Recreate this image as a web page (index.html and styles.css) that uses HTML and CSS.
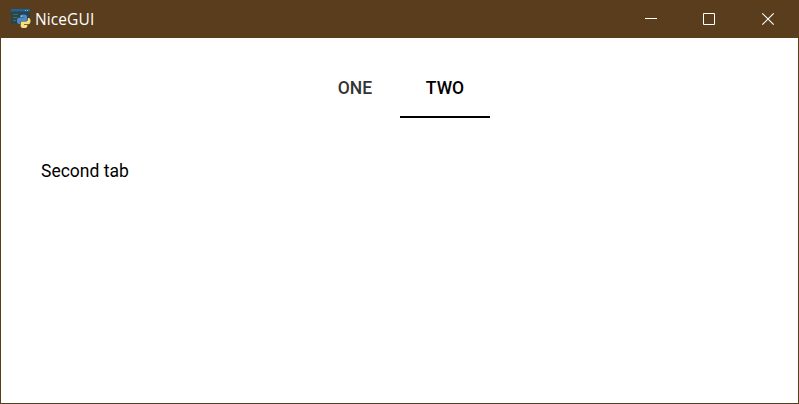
FILE: index.html
```html
<!DOCTYPE html>
<html lang="en">
<head>
<meta charset="utf-8">
<title>NiceGUI</title>
<link rel="stylesheet" href="styles.css">
</head>
<body>
<div class="window">
  <header class="titlebar">
    <svg class="app-icon" width="20" height="20" viewBox="0 0 20 20">
      <path fill="#2b4350" d="M0 0h19v15H0z"/>
      <path fill="#1c659b" d="M0 0h19v2.500H0z"/>
      <path fill="#8eb7d0" d="M14 1h1v1h-1zM16 1h1v1h-1z"/>
      <path stroke="#3d7947" d="M2 5.500h5M2 8.500h4M2 11.500h3"/>
      <path fill="#4c8bc5" d="M9 7.300Q9 5.500 12.500 5.500T16 7.500V10.500Q16 12 14.500 12H11Q9.200 12 9.200 13.800V15H8Q6 15 6 11.700T8.200 8.800H12.500V8.200H9z"/>
      <path fill="#f8df7c" d="M16.800 9H17.500Q19.500 9 19.500 12T17.400 15.300H13V16H16.300V17Q16.300 19 13 19T9.700 17V14Q9.700 12.600 11.200 12.600H14.800Q16.800 12.600 16.800 10.800z"/>
      <circle cx="10.600" cy="7" r=".6" fill="#fff"/>
      <circle cx="14.700" cy="17.300" r=".6" fill="#fff"/>
    </svg>
    <span class="title">NiceGUI</span>
    <div class="controls">
      <svg class="control" width="14" height="14" viewBox="0 0 14 14"><path d="M1 6.500h12"/></svg>
      <svg class="control" width="14" height="14" viewBox="0 0 14 14"><path d="M1.500 1.500h11v11h-11z"/></svg>
      <svg class="control close" width="14" height="14" viewBox="0 0 14 14"><path d="M1.300 1.300l11.400 11.400M12.700 1.300L1.300 12.700"/></svg>
    </div>
  </header>
  <nav class="tabs">
    <div class="tab">ONE</div>
    <div class="tab active">TWO</div>
  </nav>
  <main class="panel">Second tab</main>
</div>
</body>
</html>
```
FILE: styles.css
```css
* {
  box-sizing: border-box;
}

body {
  margin: 0;
  font-family: Roboto, sans-serif;
  font-size: 17.5px;
  color: #000;
}

.window {
  height: 404px;
  border: 1px solid #593d1c;
  border-top: 0;
  background: #fff;
  overflow: hidden;
}

.titlebar {
  display: flex;
  align-items: center;
  height: 38px;
  padding-left: 10px;
  background: #593d1c;
  color: #fff;
}

.app-icon {
  margin-right: 4px;
}

.title {
  font-family: "Open Sans", sans-serif;
  font-size: 15.5px;
  letter-spacing: 0.1px;
  line-height: 22px;
}

.controls {
  display: flex;
  gap: 44px;
  margin-left: auto;
  margin-right: 23px;
}

.control {
  fill: none;
  stroke: #fff;
  stroke-width: 1;
}

.close {
  margin-left: 1px;
  stroke-width: 1.2;
}

.tabs {
  display: flex;
  justify-content: center;
  height: 60px;
  margin-top: 20px;
  padding-left: 1px;
}

.tab {
  display: flex;
  align-items: center;
  justify-content: center;
  width: 90px;
  border-top: 2px solid transparent;
  border-bottom: 2px solid transparent;
  font-weight: 500;
  color: #333;
}

.tab.active {
  border-bottom-color: #000;
  color: #000;
}

.panel {
  padding: 40px;
  line-height: 26px;
}
```
